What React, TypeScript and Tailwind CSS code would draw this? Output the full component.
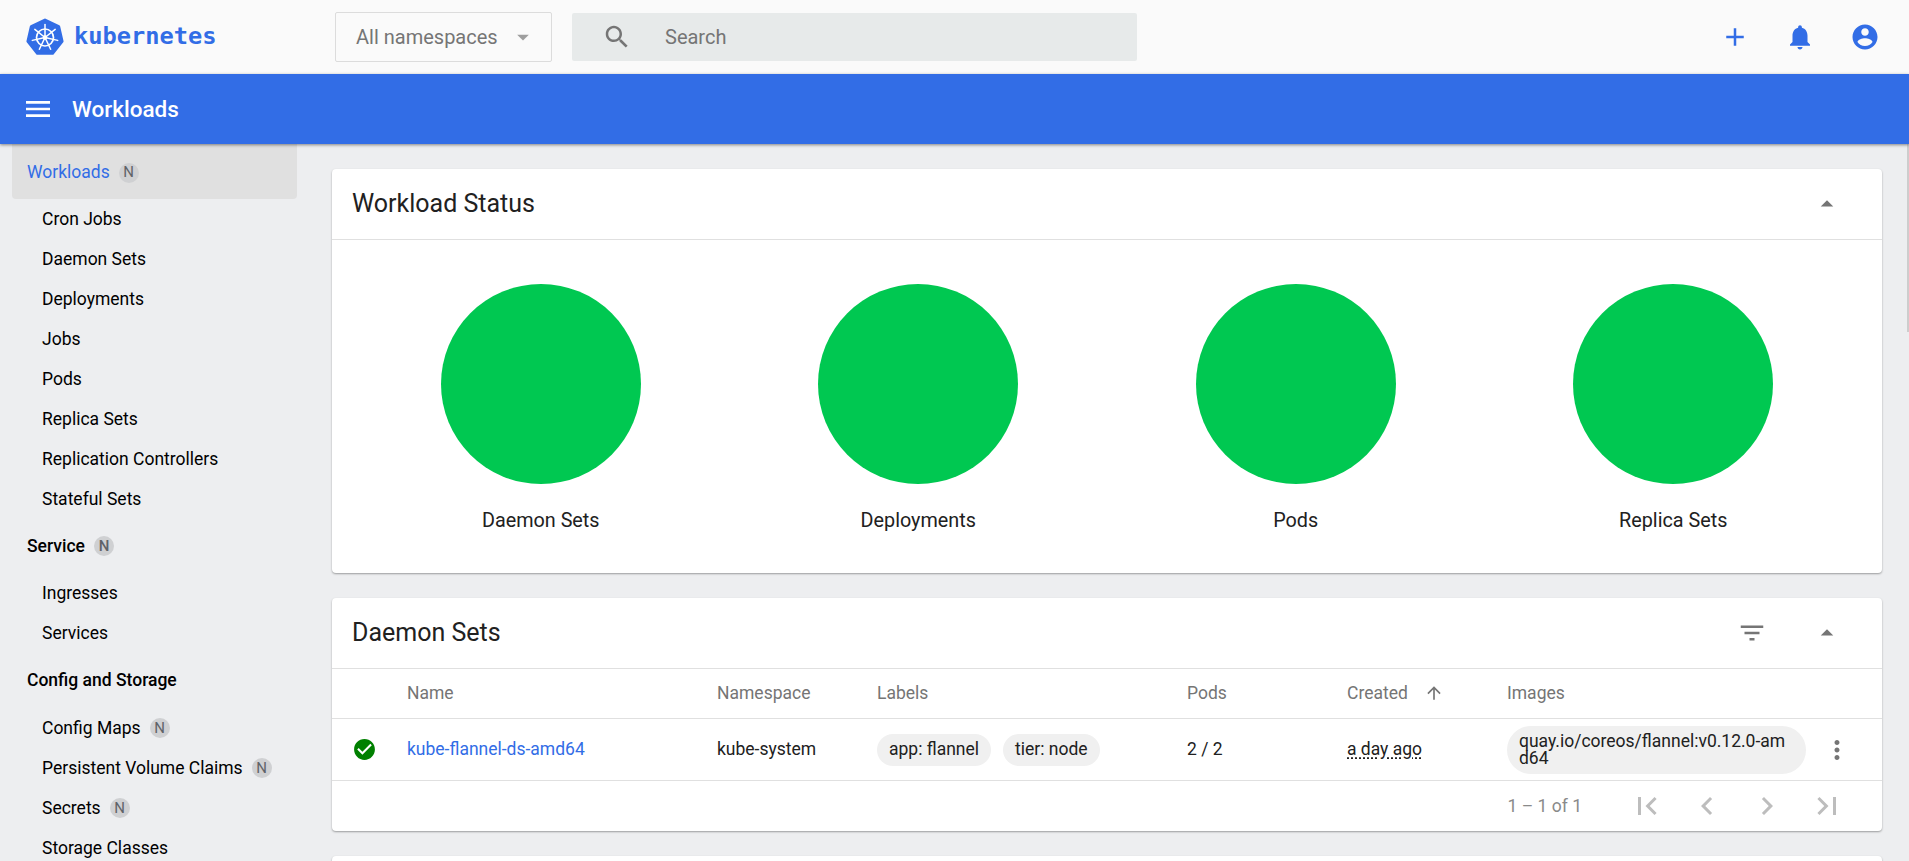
// App.tsx
const ICONS = {
  search:
    "M15.5 14h-.79l-.28-.27C15.41 12.59 16 11.11 16 9.5 16 5.91 13.09 3 9.5 3S3 5.91 3 9.5 5.91 16 9.5 16c1.61 0 3.09-.59 4.23-1.57l.27.28v.79l5 4.99L20.49 19l-4.99-5zm-6 0C7.01 14 5 11.99 5 9.5S7.01 5 9.5 5 14 7.01 14 9.5 11.99 14 9.5 14z",
  add: "M19 13h-6v6h-2v-6H5v-2h6V5h2v6h6v2z",
  bell: "M12 22c1.1 0 2-.9 2-2h-4c0 1.1.89 2 2 2zm6-6v-5c0-3.07-1.64-5.64-4.5-6.32V4c0-.83-.67-1.5-1.5-1.5s-1.5.67-1.5 1.5v.68C7.63 5.36 6 7.92 6 11v5l-2 2v1h16v-1l-2-2z",
  account:
    "M12 2C6.48 2 2 6.48 2 12s4.48 10 10 10 10-4.48 10-10S17.52 2 12 2zm0 3c1.66 0 3 1.34 3 3s-1.34 3-3 3-3-1.34-3-3 1.34-3 3-3zm0 14.2c-2.5 0-4.71-1.28-6-3.22.03-1.99 4-3.08 6-3.08 1.99 0 5.97 1.09 6 3.08-1.29 1.94-3.5 3.22-6 3.22z",
  menu: "M3 18h18v-2H3v2zm0-5h18v-2H3v2zm0-7v2h18V6H3z",
  dropUp: "M7 14l5-5 5 5z",
  dropDown: "M7 10l5 5 5-5z",
  filter: "M10 18h4v-2h-4v2zM3 6v2h18V6H3zm3 7h12v-2H6v2z",
  arrowUp: "M4 12l1.41 1.41L11 7.83V20h2V7.83l5.58 5.59L20 12l-8-8-8 8z",
  more: "M12 8c1.1 0 2-.9 2-2s-.9-2-2-2-2 .9-2 2 .9 2 2 2zm0 2c-1.1 0-2 .9-2 2s.9 2 2 2 2-.9 2-2-.9-2-2-2zm0 6c-1.1 0-2 .9-2 2s.9 2 2 2 2-.9 2-2-.9-2-2-2z",
  first: "M18.41 16.59L13.82 12l4.59-4.59L17 6l-6 6 6 6zM6 6h2v12H6z",
  last: "M5.59 7.41L10.18 12l-4.59 4.59L7 18l6-6-6-6zM16 6h2v12h-2z",
  prev: "M15.41 7.41L14 6l-6 6 6 6 1.41-1.41L10.83 12z",
  next: "M10 6L8.59 7.41 13.17 12l-4.58 4.59L10 18l6-6z",
  check:
    "M12 2C6.48 2 2 6.48 2 12s4.48 10 10 10 10-4.48 10-10S17.52 2 12 2zm-2 15l-5-5 1.41-1.41L10 14.17l7.59-7.59L19 8l-9 9z",
};

function Icon({ d, className }: { d: string; className: string }) {
  return (
    <svg viewBox="0 0 24 24" fill="currentColor" className={className}>
      <path d={d} />
    </svg>
  );
}

function Logo() {
  const at = (r: number, i: number, cy = 19.5) => {
    const a = ((-90 + (i * 360) / 7) * Math.PI) / 180;
    return [19 + r * Math.cos(a), cy + r * Math.sin(a)];
  };
  const seven = [0, 1, 2, 3, 4, 5, 6];
  return (
    <svg viewBox="0 0 38 38" className="h-[38px] w-[38px]">
      <polygon
        points={seven.map((i) => at(17.5, i).join(",")).join(" ")}
        fill="#326de6"
        stroke="#326de6"
        strokeWidth="3"
        strokeLinejoin="round"
      />
      <circle cx="19" cy="19.5" r="8.5" fill="none" stroke="#fff" strokeWidth="1.7" />
      <circle cx="19" cy="19.5" r="2.2" fill="#fff" />
      {seven.map((i) => {
        const [x, y] = at(13, i);
        return <line key={i} x1="19" y1="19.5" x2={x} y2={y} stroke="#fff" strokeWidth="1.5" strokeLinecap="round" />;
      })}
    </svg>
  );
}

function Badge() {
  return (
    <span className="flex h-5 w-5 items-center justify-center rounded-full bg-[#cfd0d2] text-[15px] text-[#5f6368]">N</span>
  );
}

function NavCategory({ label, badge, active, height }: { label: string; badge?: boolean; active?: boolean; height: string }) {
  return (
    <div
      className={
        active
          ? `flex ${height} items-center gap-[9px] rounded-b-sm bg-[#e0e0e0] pl-[15px] pt-0.5 text-[#326de6]`
          : `flex ${height} items-center gap-[9px] pl-[15px] font-medium text-black`
      }
    >
      {label}
      {badge && <Badge />}
    </div>
  );
}

function NavItem({ label, badge }: { label: string; badge?: boolean }) {
  return (
    <div className="flex h-10 items-center gap-[9px] pl-[30px] text-black">
      {label}
      {badge && <Badge />}
    </div>
  );
}

function Sidebar() {
  return (
    <aside className="h-[717px] w-[308px] shrink-0 overflow-hidden pl-3 pr-[11px]">
      <NavCategory label="Workloads" badge active height="h-[55px]" />
      <NavItem label="Cron Jobs" />
      <NavItem label="Daemon Sets" />
      <NavItem label="Deployments" />
      <NavItem label="Jobs" />
      <NavItem label="Pods" />
      <NavItem label="Replica Sets" />
      <NavItem label="Replication Controllers" />
      <NavItem label="Stateful Sets" />
      <NavCategory label="Service" badge height="h-[54px]" />
      <NavItem label="Ingresses" />
      <NavItem label="Services" />
      <NavCategory label="Config and Storage" height="h-[55px]" />
      <NavItem label="Config Maps" badge />
      <NavItem label="Persistent Volume Claims" badge />
      <NavItem label="Secrets" badge />
      <NavItem label="Storage Classes" />
    </aside>
  );
}

function CardHeader({ title, filter }: { title: string; filter?: boolean }) {
  return (
    <div className="flex h-[71px] items-center border-b border-[#e0e0e0] pl-5 pr-[40px] text-[25px] text-[#212121]">
      <span className="flex-1">{title}</span>
      {filter && <Icon d={ICONS.filter} className="mr-[45px] h-[30px] w-[30px] text-[#757575]" />}
      <Icon d={ICONS.dropUp} className="h-[30px] w-[30px] text-[#757575]" />
    </div>
  );
}

function StatusChart({ label }: { label: string }) {
  return (
    <div className="flex flex-col items-center">
      <div className="h-[200px] w-[200px] rounded-full bg-[#00c851]" />
      <div className="mt-[25px] text-[19.8px] leading-6 text-[#212121]">{label}</div>
    </div>
  );
}

const COLUMNS = "grid grid-cols-[75px_310px_160px_310px_160px_160px_1fr] items-center";

function DaemonSetsTable() {
  return (
    <div>
      <div className={`${COLUMNS} h-[50px] border-b border-[#e0e0e0] text-[#757575]`}>
        <span />
        <span>Name</span>
        <span>Namespace</span>
        <span>Labels</span>
        <span>Pods</span>
        <span className="flex items-center">
          Created
          <Icon d={ICONS.arrowUp} className="ml-[16px] h-5 w-5 -translate-y-px" />
        </span>
        <span>Images</span>
      </div>
      <div className={`${COLUMNS} h-[62px] border-b border-[#e0e0e0] text-[#212121]`}>
        <span className="flex pl-5">
          <Icon d={ICONS.check} className="h-[25px] w-[25px] text-[#008000]" />
        </span>
        <span className="text-[#326de6]">kube-flannel-ds-amd64</span>
        <span>kube-system</span>
        <span className="flex gap-3">
          <span className="flex h-8 items-center rounded-full bg-[#f0f0f0] px-3">app: flannel</span>
          <span className="flex h-8 items-center rounded-full bg-[#f0f0f0] px-3">tier: node</span>
        </span>
        <span>2 / 2</span>
        <span className="underline decoration-dotted underline-offset-2">a day ago</span>
        <span className="flex items-center">
          <span className="w-[299px] rounded-3xl bg-[#f0f0f0] px-3 py-[7px] leading-[17px] break-all">
            quay.io/coreos/flannel:v0.12.0-amd64
          </span>
          <Icon d={ICONS.more} className="ml-[16px] h-[30px] w-[30px] text-[#757575]" />
        </span>
      </div>
      <div className="flex h-[50px] items-center justify-end pr-[37px] text-[#8a8a8a]">
        <span className="mr-[47px]">1 – 1 of 1</span>
        <span className="flex gap-6 text-[#bdbdbd]">
          <Icon d={ICONS.first} className="h-9 w-9" />
          <Icon d={ICONS.prev} className="h-9 w-9" />
          <Icon d={ICONS.next} className="h-9 w-9" />
          <Icon d={ICONS.last} className="h-9 w-9" />
        </span>
      </div>
    </div>
  );
}

function Card({ children }: { children?: React.ReactNode }) {
  return (
    <section className="min-h-[71px] shrink-0 rounded-[4px] bg-white shadow-[0_1px_2px_rgba(0,0,0,0.35)]">{children}</section>
  );
}

export default function App() {
  return (
    <div className="relative flex h-[861px] w-[1909px] flex-col overflow-hidden bg-[#edeef0] font-[Roboto,sans-serif] text-[17.5px]">
      <header className="flex h-[74px] shrink-0 items-center bg-[#fafafa]">
        <div className="ml-[26px] flex w-[309px] items-center gap-[10px]">
          <Logo />
          <span className="font-['DejaVu_Sans_Mono',monospace] text-[23.7px] font-bold text-[#326de6]">kubernetes</span>
        </div>
        <div className="flex h-[50px] w-[217px] items-center justify-between rounded-[2px] border border-[#dcdcdc] pl-5 pr-[14px] text-[20px] text-[#757575]">
          All namespaces
          <Icon d={ICONS.dropDown} className="h-7 w-7 text-[#9e9e9e]" />
        </div>
        <div className="ml-5 flex h-12 w-[565px] items-center rounded-[2px] bg-[#e7eaea] pl-[30px] text-[20px] text-[#757575]">
          <Icon d={ICONS.search} className="h-[30px] w-[30px]" />
          <span className="ml-[33px]">Search</span>
        </div>
        <div className="ml-auto mr-[29px] flex items-center gap-[35px] text-[#326de6]">
          <Icon d={ICONS.add} className="h-[30px] w-[30px]" />
          <Icon d={ICONS.bell} className="h-[30px] w-[30px]" />
          <Icon d={ICONS.account} className="h-[30px] w-[30px]" />
        </div>
      </header>
      <div className="relative z-10 flex h-[70px] shrink-0 items-center bg-[#326de6] pl-[22px] text-white shadow-[0_1px_3px_rgba(0,0,0,0.45)]">
        <Icon d={ICONS.menu} className="h-8 w-8" />
        <span className="ml-[18px] translate-y-px text-[22.5px] font-medium">Workloads</span>
      </div>
      <div className="flex min-h-0 flex-1">
        <Sidebar />
        <main className="flex flex-1 flex-col gap-[25px] pl-6 pr-[27px] pt-[25px]">
          <Card>
            <CardHeader title="Workload Status" />
            <div className="grid h-[333px] grid-cols-4 px-5 pt-[44px]">
              <StatusChart label="Daemon Sets" />
              <StatusChart label="Deployments" />
              <StatusChart label="Pods" />
              <StatusChart label="Replica Sets" />
            </div>
          </Card>
          <Card>
            <CardHeader title="Daemon Sets" filter />
            <DaemonSetsTable />
          </Card>
          <Card />
        </main>
      </div>
      {/* page scrollbar thumb */}
      <div className="absolute right-0 top-[144px] h-[188px] w-[2px] bg-[#cdcdcd]" />
    </div>
  );
}
